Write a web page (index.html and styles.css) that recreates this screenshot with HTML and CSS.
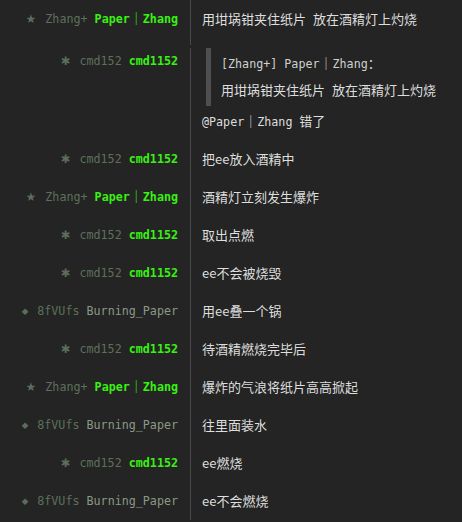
FILE: index.html
```html
<!DOCTYPE html>
<html>
<head>
<meta charset="utf-8">
<link rel="stylesheet" href="styles.css">
</head>
<body>
<div class="log">
  <div class="row first">
    <div class="who"><span class="sym star">★</span><span class="nick">Zhang+</span> <span class="name">Paper<span class="fw">｜</span>Zhang</span></div>
    <div class="msg">用坩埚钳夹住纸片 放在酒精灯上灼烧</div>
  </div>
  <div class="row quote">
    <div class="who"><span class="sym ast">✱</span><span class="nick">cmd152</span> <span class="name">cmd1152</span></div>
    <div class="msg">
      <blockquote class="qb">
        <div class="qhead">[Zhang+] Paper<span class="fw">｜</span>Zhang<span class="cjk">：</span></div>
        <div class="qtext">用坩埚钳夹住纸片 放在酒精灯上灼烧</div>
      </blockquote>
      <div class="reply"><span class="mono">@Paper<span class="fw">｜</span>Zhang</span> 错了</div>
    </div>
  </div>
  <div class="row">
    <div class="who"><span class="sym ast">✱</span><span class="nick">cmd152</span> <span class="name">cmd1152</span></div>
    <div class="msg">把ee放入酒精中</div>
  </div>
  <div class="row">
    <div class="who"><span class="sym star">★</span><span class="nick">Zhang+</span> <span class="name">Paper<span class="fw">｜</span>Zhang</span></div>
    <div class="msg">酒精灯立刻发生爆炸</div>
  </div>
  <div class="row">
    <div class="who"><span class="sym ast">✱</span><span class="nick">cmd152</span> <span class="name">cmd1152</span></div>
    <div class="msg">取出点燃</div>
  </div>
  <div class="row">
    <div class="who"><span class="sym ast">✱</span><span class="nick">cmd152</span> <span class="name">cmd1152</span></div>
    <div class="msg">ee不会被烧毁</div>
  </div>
  <div class="row">
    <div class="who"><span class="sym dia">◆</span><span class="nick">8fVUfs</span> <span class="name plain">Burning_Paper</span></div>
    <div class="msg">用ee叠一个锅</div>
  </div>
  <div class="row">
    <div class="who"><span class="sym ast">✱</span><span class="nick">cmd152</span> <span class="name">cmd1152</span></div>
    <div class="msg">待酒精燃烧完毕后</div>
  </div>
  <div class="row">
    <div class="who"><span class="sym star">★</span><span class="nick">Zhang+</span> <span class="name">Paper<span class="fw">｜</span>Zhang</span></div>
    <div class="msg">爆炸的气浪将纸片高高掀起</div>
  </div>
  <div class="row">
    <div class="who"><span class="sym dia">◆</span><span class="nick">8fVUfs</span> <span class="name plain">Burning_Paper</span></div>
    <div class="msg">往里面装水</div>
  </div>
  <div class="row">
    <div class="who"><span class="sym ast">✱</span><span class="nick">cmd152</span> <span class="name">cmd1152</span></div>
    <div class="msg">ee燃烧</div>
  </div>
  <div class="row">
    <div class="who"><span class="sym dia">◆</span><span class="nick">8fVUfs</span> <span class="name plain">Burning_Paper</span></div>
    <div class="msg">ee不会燃烧</div>
  </div>
</div>
</body>
</html>
```
FILE: styles.css
```css
html, body {
  margin: 0;
  padding: 0;
  background: #232423;
}
.log {
  display: flex;
  flex-direction: column;
  width: 462px;
  height: 522px;
  overflow: hidden;
}
.row {
  display: flex;
  align-items: stretch;
  flex: 0 0 auto;
}
.who {
  flex: 0 0 178px;
  height: 16px;
  padding: 11px 12px 11px 0;
  border-right: 1px solid #4a4a4a;
  text-align: right;
  white-space: nowrap;
  font-family: "DejaVu Sans Mono", "Noto Sans CJK SC", monospace;
  font-size: 11.7px;
  line-height: 16px;
}
.sym {
  display: inline-block;
  margin-right: 9px;
  font-family: "DejaVu Sans", sans-serif;
  color: #5d6d5b;
  text-align: center;
  line-height: 0;
}
.star { font-size: 12px; }
.ast { font-size: 11.5px; font-weight: bold; }
.dia { font-size: 8.5px; vertical-align: 1px; }
.nick {
  color: #5f6f5d;
}
.name {
  color: #3af014;
  font-weight: bold;
}
.name.plain {
  color: #8a9a86;
  font-weight: normal;
}
.fw {
  font-family: "Noto Sans CJK SC", sans-serif;
  font-size: 13px;
  font-weight: normal;
  line-height: 0;
}
.msg {
  flex: 1 1 auto;
  padding: 11px 0 11px 11px;
  font-family: "Noto Sans CJK SC", "Liberation Sans", sans-serif;
  font-size: 13px;
  line-height: 16px;
  color: #dedede;
  white-space: nowrap;
  word-spacing: 4px;
}
.row.first .who,
.row.first .msg {
  padding-bottom: 18px;
}
.row.quote {
  margin-top: 3px;
}
.row.quote .who {
  padding-top: 5px;
  height: 76px;
}
.row.quote .msg {
  padding-top: 0;
}
.qb {
  margin: 0 0 0 4px;
  padding: 4px 0 4px 10px;
  height: 50px;
  border-left: 5px solid #4f4f4f;
  line-height: 25px;
}
.qhead,
.qtext {
  height: 25px;
}
.qhead {
  font-family: "DejaVu Sans Mono", "Noto Sans CJK SC", monospace;
  font-size: 11.7px;
  color: #d0d0d0;
  word-spacing: 0;
}
.cjk {
  font-family: "Noto Sans CJK SC", sans-serif;
  font-size: 13px;
  line-height: 0;
}
.reply {
  margin-top: 7px;
  height: 16px;
}
.mono {
  font-family: "DejaVu Sans Mono", "Noto Sans CJK SC", monospace;
  font-size: 11.7px;
  line-height: 0;
  word-spacing: 0;
}
```
